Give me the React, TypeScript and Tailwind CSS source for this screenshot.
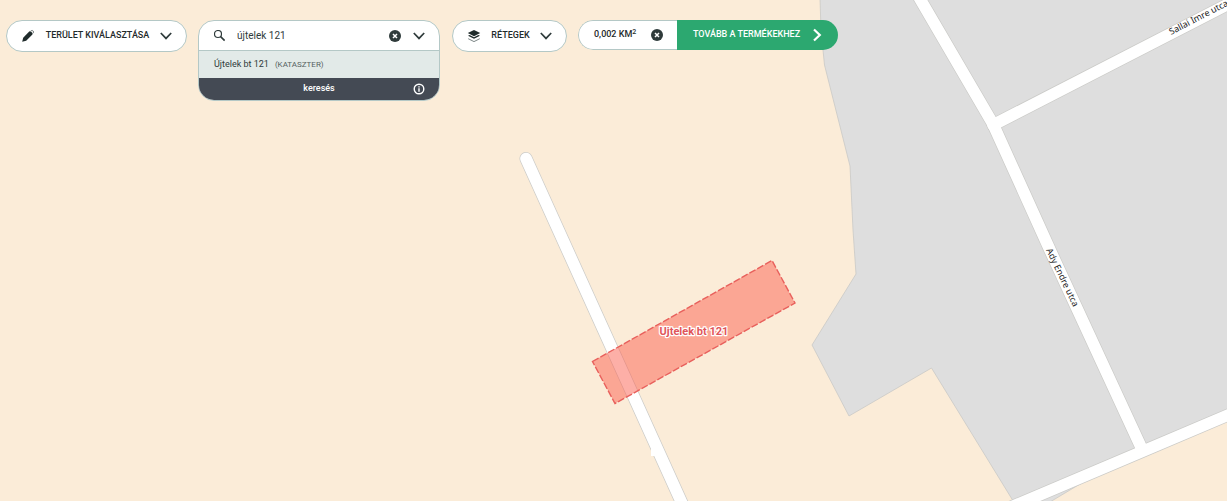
import { useState } from "react";
import type { ReactNode } from "react";

const roads = [
  "M919.5 -2 L993 124 L1050 250 L1141 447",
  "M993 125 L1240 -2",
  "M990 516 L1141 452 L1240 410",
  "M526 158.5 L690 521",
];

const Chevron = () => (
  <svg viewBox="0 0 12 8" className="h-2 w-3 shrink-0" fill="none" stroke="#2f3b3b" strokeWidth="1.7" aria-hidden="true">
    <path d="M0.8 1 L6 6.4 L11.2 1" />
  </svg>
);

const ClearIcon = () => (
  <svg viewBox="0 0 12 12" className="size-3" aria-hidden="true">
    <circle cx="6" cy="6" r="6" fill="#2f3b3b" />
    <path d="M4 4 L8 8 M8 4 L4 8" stroke="#fff" strokeWidth="1.5" />
  </svg>
);

const PencilIcon = () => (
  <svg viewBox="0 0 14 14" className="size-3.5 shrink-0" fill="#1f2b2b" aria-hidden="true">
    <path d="M1.2 12.8 L2.2 8.8 L8.2 2.6 Q9.2 1.8 10.2 2.8 L11.2 3.8 Q12.2 4.8 11.2 5.8 L5.2 11.8 Z" />
    <path d="M9.8 1.9 Q11.2 1 12.2 2 Q13 3 12.2 4.2" fill="none" stroke="#6d7676" strokeWidth="0.9" />
  </svg>
);

const LayersIcon = () => (
  <svg viewBox="0 0 14 14" className="size-3.5 shrink-0" aria-hidden="true">
    <path d="M7 1 L13.2 4.1 L7 7.2 L0.8 4.1 Z" fill="#1f2b2b" />
    <path d="M1 6.8 L2.6 6 L7 8.2 L11.4 6 L13 6.8 L7 9.8 Z" fill="#1f2b2b" />
    <path d="M1.2 9.7 L7 12.6 L12.8 9.7" fill="none" stroke="#7d8787" strokeWidth="1" />
  </svg>
);

function PillButton({ icon, label, className }: { icon: ReactNode; label: string; className: string }) {
  return (
    <button
      type="button"
      className={`flex h-8 shrink-0 items-center justify-between rounded-full border border-[#b4c8c6] bg-white px-3.5 text-[9px] font-medium text-[#1f2b2b] ${className}`}
    >
      {icon}
      <span>{label}</span>
      <Chevron />
    </button>
  );
}

function MapCanvas() {
  return (
    <svg
      viewBox="0 0 1227 501"
      preserveAspectRatio="xMidYMid slice"
      className="absolute inset-0 h-full w-full"
      role="img"
      aria-label="Térkép"
    >
      <path
        d="M820 -2 L821 30 L824.5 65 L850 166 L853 230 L856 274 L812 345 L849 416 L931.5 368 L1015 504 L1050 502 L1100 472 L1240 412 L1240 -2 Z"
        fill="#dedede"
        stroke="#c9c9c6"
        strokeWidth="0.8"
      />

      <g fill="none" strokeLinecap="round" strokeLinejoin="round">
        {roads.map((d) => (
          <path key={d} d={d} stroke="#cbcbc8" strokeWidth="13" />
        ))}
        {roads.map((d) => (
          <path key={d} d={d} stroke="#fff" strokeWidth="11.6" />
        ))}
      </g>
      <rect x="651" y="448" width="6" height="8" fill="#fff" />

      <path
        d="M592.5 361.5 L772 260.5 L795 303 L615 403.5 Z"
        fill="#fc6050"
        fillOpacity="0.5"
        stroke="#e8605c"
        strokeWidth="1.4"
        strokeDasharray="7 2"
      />
      <text
        x="694"
        y="335"
        textAnchor="middle"
        className="font-['Roboto'] text-[11px] font-bold"
        fill="#e0555a"
        stroke="#fff"
        strokeWidth="2.4"
        strokeLinejoin="round"
        paintOrder="stroke"
      >
        Ujtelek bt 121
      </text>

      <g className="font-['Noto_Sans'] text-[9px]" fill="#222">
        <text transform="translate(1171 35) rotate(-27.2)">Sallai Imre utca</text>
        <text transform="translate(1046 250) rotate(64.5)">Ady Endre utca</text>
      </g>
    </svg>
  );
}

function SearchBox() {
  const [query, setQuery] = useState("újtelek 121");

  return (
    <form
      className="w-[242px] shrink-0 overflow-hidden rounded-2xl border border-[#b4c8c6] bg-white"
      onSubmit={(e) => e.preventDefault()}
    >
      <div className="flex h-[29px] items-center px-3.5">
        <svg viewBox="0 0 12 12" className="mr-3 size-3 shrink-0" fill="none" stroke="#2f3b3b" aria-hidden="true">
          <circle cx="5" cy="4" r="3.5" strokeWidth="1.2" />
          <path d="M7.6 6.6 L11.6 10.6" strokeWidth="1.6" />
        </svg>
        <input
          type="text"
          aria-label="Keresés"
          value={query}
          onChange={(e) => setQuery(e.target.value)}
          className="min-w-0 flex-1 bg-transparent text-[10px] text-[#2f3b3b] outline-none"
        />
        <button type="button" aria-label="Törlés" className="mr-3" onClick={() => setQuery("")}>
          <ClearIcon />
        </button>
        <button type="button" aria-label="Megnyitás">
          <Chevron />
        </button>
      </div>
      <button
        type="button"
        className="flex h-7 w-full items-center gap-1.5 border-t border-[#b4c8c6] bg-[#e2eae8] px-[15px] text-[9px] text-[#2f3b3b]"
      >
        <span>Újtelek bt 121</span>
        <span className="text-[8px] text-[#56625f]">(KATASZTER)</span>
      </button>
      <div className="grid h-[22px] grid-cols-[1fr_auto_1fr] items-center bg-[#444a54] px-3.5 text-white">
        <button type="submit" className="col-start-2 text-[9px] font-medium">
          keresés
        </button>
        <button type="button" aria-label="Információ" className="justify-self-end">
          <svg viewBox="0 0 12 12" className="size-3" fill="none" stroke="#fff" aria-hidden="true">
            <circle cx="6" cy="6" r="4.8" strokeWidth="1.4" />
            <path d="M6 5.2 V8.8 M6 3.2 V4.4" strokeWidth="1.4" />
          </svg>
        </button>
      </div>
    </form>
  );
}

export default function App() {
  return (
    <main className="relative min-h-screen overflow-hidden bg-[#fbecd8] font-['Roboto',sans-serif]">
      <MapCanvas />

      <div className="relative flex items-start px-1.5 pt-5">
        <PillButton icon={<PencilIcon />} label="TERÜLET KIVÁLASZTÁSA" className="mr-[11px] w-[181px]" />
        <SearchBox />
        <PillButton icon={<LayersIcon />} label="RÉTEGEK" className="mr-[11px] ml-3 w-[115px]" />

        <div className="flex h-[30px] shrink-0 overflow-hidden rounded-full text-[9px] font-medium">
          <div className="flex w-[99px] items-center justify-between rounded-l-full border border-r-0 border-[#b4c8c6] bg-white pr-3.5 pl-[15px] text-[#1f2b2b]">
            <span>
              0,002 KM<sup className="text-[7px]">2</sup>
            </span>
            <button type="button" aria-label="Terület törlése">
              <ClearIcon />
            </button>
          </div>
          <button
            type="button"
            className="flex w-[161px] items-center justify-between bg-[#2ca870] px-4 text-white"
          >
            <span>TOVÁBB A TERMÉKEKHEZ</span>
            <svg viewBox="0 0 10 14" className="h-3.5 w-2.5" fill="none" stroke="#fff" strokeWidth="2.2" aria-hidden="true">
              <path d="M2 1.5 L7.8 7 L2 12.5" />
            </svg>
          </button>
        </div>
      </div>
    </main>
  );
}
